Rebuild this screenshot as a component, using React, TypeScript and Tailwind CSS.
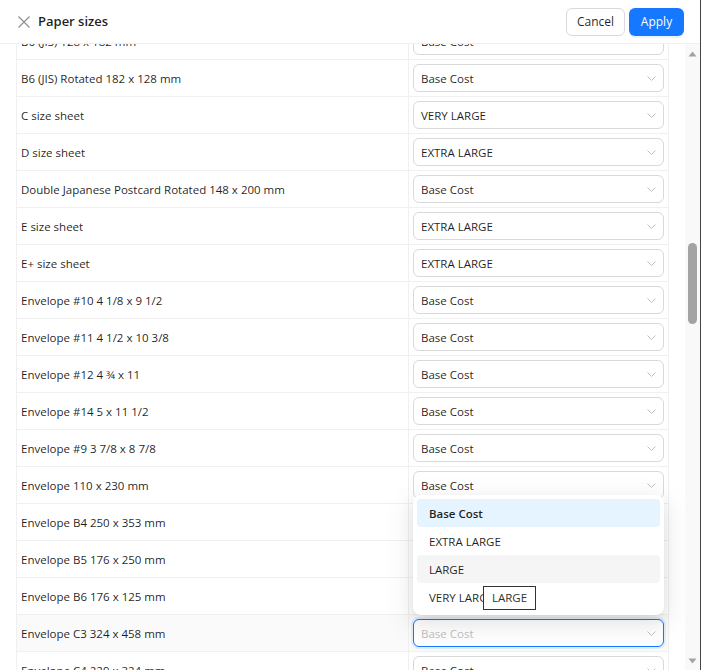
const rows = [
  { name: "B6 (JIS) 128 x 182 mm", value: "Base Cost" },
  { name: "B6 (JIS) Rotated 182 x 128 mm", value: "Base Cost" },
  { name: "C size sheet", value: "VERY LARGE" },
  { name: "D size sheet", value: "EXTRA LARGE" },
  { name: "Double Japanese Postcard Rotated 148 x 200 mm", value: "Base Cost" },
  { name: "E size sheet", value: "EXTRA LARGE" },
  { name: "E+ size sheet", value: "EXTRA LARGE" },
  { name: "Envelope #10 4 1/8 x 9 1/2", value: "Base Cost" },
  { name: "Envelope #11 4 1/2 x 10 3/8", value: "Base Cost" },
  { name: "Envelope #12 4 ¾ x 11", value: "Base Cost" },
  { name: "Envelope #14 5 x 11 1/2", value: "Base Cost" },
  { name: "Envelope #9 3 7/8 x 8 7/8", value: "Base Cost" },
  { name: "Envelope 110 x 230 mm", value: "Base Cost" },
  { name: "Envelope B4 250 x 353 mm", value: "Base Cost" },
  { name: "Envelope B5 176 x 250 mm", value: "Base Cost" },
  { name: "Envelope B6 176 x 125 mm", value: "Base Cost" },
  { name: "Envelope C3 324 x 458 mm", value: "Base Cost", open: true },
  { name: "Envelope C4 229 x 324 mm", value: "Base Cost" },
]

const options = ["Base Cost", "EXTRA LARGE", "LARGE", "VERY LARGE"]

function Chevron() {
  return (
    <svg width="9" height="5" viewBox="0 0 9 5" className="shrink-0">
      <polyline points="0.5,0.5 4.5,4.5 8.5,0.5" fill="none" stroke="#bfbfbf" strokeWidth="1" />
    </svg>
  )
}

function Dropdown() {
  return (
    <div className="absolute left-0 right-0 bottom-[calc(100%+4px)] z-10 rounded-lg bg-white p-1 text-[rgba(0,0,0,0.88)] shadow-[0_6px_16px_0_rgba(0,0,0,0.08),0_3px_6px_-4px_rgba(0,0,0,0.12),0_9px_28px_8px_rgba(0,0,0,0.05)]">
      {options.map((opt) => (
        <div
          key={opt}
          className={
            "relative flex h-[28px] items-center rounded px-3 pt-px " +
            (opt === "Base Cost" ? "bg-[#e6f4ff] font-semibold " : "") +
            (opt === "LARGE" ? "bg-[#f5f5f5] " : "")
          }
        >
          {opt}
          {opt === "VERY LARGE" && (
            <span className="absolute left-[66px] top-[3px] flex h-[24px] items-center border border-[#333] bg-white px-2 text-[11.5px] text-[#333]">
              LARGE
            </span>
          )}
        </div>
      ))}
    </div>
  )
}

export default function App() {
  return (
    <div
      className="flex h-[670px] w-[701px] flex-col overflow-hidden border-r border-[#444] bg-white text-[11.5px] text-[rgba(0,0,0,0.88)]"
      style={{ fontFamily: '"Open Sans", "Noto Sans", sans-serif' }}
    >
      <header className="flex h-[44px] shrink-0 items-center border-b border-[#f0f0f0] pl-[18px] pr-4">
        <svg width="12" height="12" viewBox="0 0 12 12" className="shrink-0">
          <path d="M0.5 0.5 L11.5 11.5 M11.5 0.5 L0.5 11.5" stroke="#8c8c8c" strokeWidth="1.1" />
        </svg>
        <h1 className="ml-2 text-[13px] font-semibold">Paper sizes</h1>
        <div className="ml-auto flex gap-1">
          <button className="h-[28px] w-[59px] rounded-md border border-[#d9d9d9] bg-white text-[12px]">Cancel</button>
          <button className="h-[28px] w-[55px] rounded-md bg-[#1677ff] text-[12px] text-white shadow-[0_2px_0_rgba(5,145,255,0.1)]">
            Apply
          </button>
        </div>
      </header>

      <div className="flex min-h-0 flex-1">
        <div className="min-w-0 flex-1 overflow-hidden pl-4 pr-[16px]">
          <div className="-mt-[21px] border-x border-[#f0f0f0]">
            {rows.map((row) => (
              <div
                key={row.name}
                className={"flex h-[37px] border-b border-[#f0f0f0] " + (row.open ? "bg-[#fafafa]" : "")}
              >
                <div className="flex w-[392px] items-center border-r border-[#f0f0f0] pl-1 pt-[2px]">{row.name}</div>
                <div className="flex flex-1 items-center px-1">
                  <div className="relative w-full">
                    <div
                      className={
                        "flex h-[28px] w-full items-center justify-between rounded-md border bg-white pl-[7px] pr-[7px] " +
                        (row.open
                          ? "border-[#1677ff] text-[#bfbfbf] shadow-[0_0_0_2px_rgba(5,145,255,0.1)]"
                          : "border-[#d9d9d9]")
                      }
                    >
                      <span className="pt-[2px]">{row.value}</span>
                      <Chevron />
                    </div>
                    {row.open && <Dropdown />}
                  </div>
                </div>
              </div>
            ))}
          </div>
        </div>

        <div className="flex w-[15px] shrink-0 flex-col items-center bg-[#f9f9f9]">
          <svg width="9" height="6" viewBox="0 0 9 6" className="mt-[7px]">
            <polygon points="4.5,0.5 8.5,5.5 0.5,5.5" fill="#a3a3a3" />
          </svg>
          <div className="mt-[186px] h-[81px] w-[9px] rounded-full bg-[#a3a3a3]" />
          <svg width="9" height="6" viewBox="0 0 9 6" className="mb-[6px] mt-auto">
            <polygon points="0.5,0.5 8.5,0.5 4.5,5.5" fill="#a3a3a3" />
          </svg>
        </div>
      </div>
    </div>
  )
}
